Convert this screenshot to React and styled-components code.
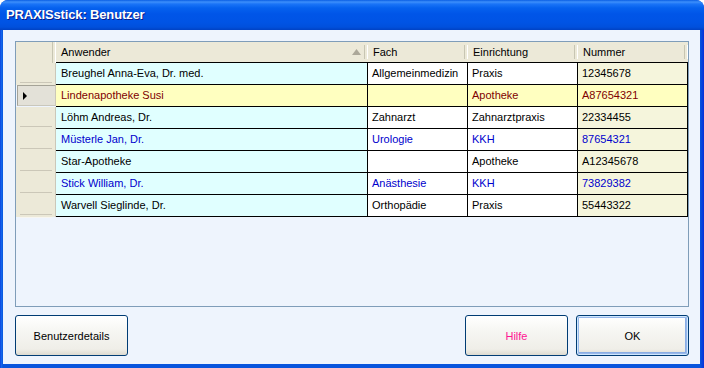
import React from "react";
import styled, { createGlobalStyle, css } from "styled-components";

const GlobalStyle = createGlobalStyle`
  html, body { margin: 0; padding: 0; background: #ffffff; }
  body { font-family: "Liberation Sans", Arial, sans-serif; }
  * { box-sizing: border-box; }
`;

const COLS = "40px 312px 100px 110px 110px";

const Window = styled.div`
  width: 704px;
  height: 368px;
  display: flex;
  flex-direction: column;
  background: linear-gradient(to right, #0831d9 0px, #166aee 1px, #0855dd 3px, #0855dd 700px, #0831d9 704px);
  border-radius: 8px 8px 0 0;
  overflow: hidden;
`;

const TitleBar = styled.div`
  height: 30px;
  flex: 0 0 30px;
  display: flex;
  align-items: center;
  padding: 0 0 2px 6px;
  background: linear-gradient(
    to bottom,
    #0a5ee4 0px,
    #3d8ffb 2px,
    #1a74f7 4px,
    #0561ee 8px,
    #0055e8 14px,
    #0054e5 22px,
    #0050dd 27px,
    #0042c4 30px
  );
  color: #ffffff;
  font-weight: bold;
  font-size: 13px;
  letter-spacing: -0.15px;
  text-shadow: 1px 1px 0 #0a1d8a;
`;

const Body = styled.div`
  flex: 1;
  margin: 0 4px 4px 3px;
  background: #eef4fd;
  padding: 11px 11px 8px 12px;
  display: flex;
  flex-direction: column;
  gap: 8px;
  font-size: 11px;
`;

const Grid = styled.div`
  height: 266px;
  border: 1px solid #7f9db9;
  display: flex;
  flex-direction: column;
  background: #eef4fd;
`;

const Row = styled.div`
  display: grid;
  grid-template-columns: ${COLS};
  height: ${(p) => (p.$header ? 21 : 22)}px;
`;

const HeaderCell = styled.div`
  position: relative;
  background: #ece9d8;
  display: flex;
  align-items: center;
  justify-content: space-between;
  padding: 0 7px 0 5px;
  color: #000;
  border-bottom: ${(p) => (p.$corner ? "none" : "1px solid #000")};
  &::after {
    content: "";
    position: absolute;
    right: 0;
    top: ${(p) => (p.$corner ? 0 : 3)}px;
    bottom: ${(p) => (p.$corner ? 0 : 3)}px;
    width: 2px;
    border-left: 1px solid #c7c5b2;
    border-right: 1px solid #ffffff;
  }
`;

const SortArrow = styled.svg`
  width: 9px;
  height: 6px;
  flex: 0 0 auto;
`;

const RowHeader = styled.div`
  position: relative;
  background: #ece9d8;
  border-right: 1px solid #cbc7b8;
  display: flex;
  align-items: center;
  padding-left: 5px;
  ${(p) =>
    p.$selected &&
    css`
      margin: 0 0 1px 1px;
      background: #e3e1d8;
      border-top: 1px solid #a5a397;
      border-left: 1px solid #a5a397;
      border-bottom: 1px solid #c9c7bc;
    `}
  &::after {
    content: "";
    position: absolute;
    left: 4px;
    right: 3px;
    bottom: -1px;
    height: 2px;
    border-top: 1px solid #cbc7b8;
    border-bottom: 1px solid #f7f6f1;
    display: ${(p) => (p.$selected ? "none" : "block")};
  }
`;

const bgFor = (col, selected) => {
  if (selected) return "#ffffc0";
  if (col === 0) return "#e0ffff";
  if (col === 3) return "#f5f5dc";
  return "#ffffff";
};

const Cell = styled.div`
  background: ${(p) => bgFor(p.$col, p.$selected)};
  color: ${(p) => p.$color};
  border-right: 1px solid #000;
  border-bottom: 1px solid #000;
  padding-left: ${(p) => (p.$col === 0 ? 5 : 4)}px;
  line-height: 21px;
  white-space: nowrap;
  overflow: hidden;
`;

const ButtonBar = styled.div`
  display: flex;
  justify-content: space-between;
  align-items: flex-start;
`;

const ButtonGroup = styled.div`
  display: flex;
  gap: 8px;
`;

const Button = styled.button`
  width: ${(p) => p.$w}px;
  height: 41px;
  border: 1px solid #003c74;
  border-radius: 3px;
  background: linear-gradient(to bottom, #ffffff 0%, #f6f6f2 40%, #efeee8 85%, #dcdad0 100%);
  font-family: "Liberation Sans", Arial, sans-serif;
  font-size: 11px;
  color: ${(p) => p.$color || "#000"};
  padding: 0;
  ${(p) =>
    p.$default &&
    css`
      box-shadow: inset 0 0 0 1px #cee7ff, inset 0 0 0 2px #98b8ea, inset -1px -1px 0 2px #89ade4;
    `}
`;

const rows = [
  { c: ["Breughel Anna-Eva, Dr. med.", "Allgemeinmedizin", "Praxis", "12345678"], color: "#000" },
  { c: ["Lindenapotheke Susi", "", "Apotheke", "A87654321"], color: "#800000", selected: true },
  { c: ["Löhm Andreas, Dr.", "Zahnarzt", "Zahnarztpraxis", "22334455"], color: "#000" },
  { c: ["Müsterle Jan, Dr.", "Urologie", "KKH", "87654321"], color: "#0000cd" },
  { c: ["Star-Apotheke", "", "Apotheke", "A12345678"], color: "#000" },
  { c: ["Stick William, Dr.", "Anästhesie", "KKH", "73829382"], color: "#0000cd" },
  { c: ["Warvell Sieglinde, Dr.", "Orthopädie", "Praxis", "55443322"], color: "#000" },
];

export default function App() {
  return (
    <>
      <GlobalStyle />
      <Window>
        <TitleBar>PRAXISstick: Benutzer</TitleBar>
        <Body>
          <Grid>
            <Row $header>
              <HeaderCell $corner />
              <HeaderCell>
                <span>Anwender</span>
                <SortArrow viewBox="0 0 9 6">
                  <path d="M0 6 L4.5 0 L9 6 Z" fill="#aca899" />
                </SortArrow>
              </HeaderCell>
              <HeaderCell>Fach</HeaderCell>
              <HeaderCell>Einrichtung</HeaderCell>
              <HeaderCell>Nummer</HeaderCell>
            </Row>
            {rows.map((r, i) => (
              <Row key={i}>
                <RowHeader $selected={r.selected}>
                  {r.selected && (
                    <svg width="4" height="8" viewBox="0 0 4 8">
                      <path d="M0 0 L4 4 L0 8 Z" fill="#000" />
                    </svg>
                  )}
                </RowHeader>
                {r.c.map((t, j) => (
                  <Cell key={j} $col={j} $selected={r.selected} $color={r.color}>
                    {t}
                  </Cell>
                ))}
              </Row>
            ))}
          </Grid>
          <ButtonBar>
            <Button $w={113}>Benutzerdetails</Button>
            <ButtonGroup>
              <Button $w={103} $color="#ff1493">Hilfe</Button>
              <Button $w={113} $default>OK</Button>
            </ButtonGroup>
          </ButtonBar>
        </Body>
      </Window>
    </>
  );
}
